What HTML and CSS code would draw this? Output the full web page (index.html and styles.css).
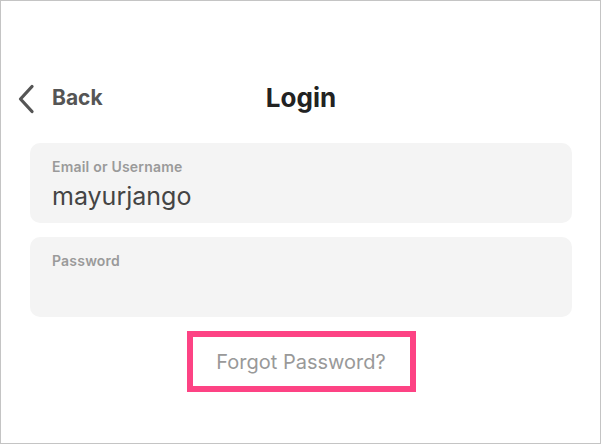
FILE: index.html
```html
<!DOCTYPE html>
<html lang="en">
<head>
  <meta charset="UTF-8"/>
  <meta name="viewport" content="width=device-width, initial-scale=1.0"/>
  <title>Login</title>
  <link rel="stylesheet" href="styles.css">
</head>
<body>
  <div class="screen">
    <div class="header">
      <a class="back" href="#">
        <svg class="chevron" width="18" height="30" viewBox="0 0 18 30">
          <path d="M15 2.5 L3.5 15 L15 27.5" fill="none" stroke="#555" stroke-width="3.3" stroke-linecap="round" stroke-linejoin="round"/>
        </svg>
        <span>Back</span>
      </a>
      <h1>Login</h1>
      <div></div>
    </div>

    <div class="field">
      <label>Email or Username</label>
      <div class="value">mayurjango</div>
    </div>

    <div class="field">
      <label>Password</label>
      <div class="value"></div>
    </div>

    <div class="forgot-wrap">
      <a class="forgot" href="#">Forgot Password?</a>
    </div>
  </div>
</body>
</html>
```

FILE: styles.css
```css
* {
  box-sizing: border-box;
}

body {
  margin: 0;
  font-family: Inter, 'Noto Sans', sans-serif;
  background: #fff;
}

.screen {
  width: 601px;
  height: 444px;
  border: 1px solid #c4c4c4;
  padding: 0 28px 0 29px;
}

.header {
  display: grid;
  grid-template-columns: 1fr auto 1fr;
  align-items: center;
  height: 40px;
  margin: 77px -13px 25px -13px;
}

.back {
  display: flex;
  align-items: center;
  gap: 17px;
  color: #555;
  text-decoration: none;
  font-size: 21px;
  font-weight: 700;
  line-height: 40px;
}

.chevron {
  display: block;
  margin-top: 2px;
}

h1 {
  margin: 0;
  font-size: 26px;
  font-weight: 700;
  line-height: 40px;
  color: #222;
}

.field {
  background: #f4f4f4;
  border-radius: 10px;
  height: 80px;
  padding: 15px 22px;
  margin-bottom: 14px;
}

.field label {
  display: block;
  font-size: 14px;
  line-height: 17px;
  font-weight: 600;
  letter-spacing: 0.2px;
  color: #9a9a9a;
}

.field .value {
  font-size: 25px;
  line-height: 30px;
  color: #444;
  margin-top: 6px;
}

.forgot-wrap {
  display: flex;
  justify-content: center;
  margin-top: 4px;
}

.forgot {
  display: block;
  width: 229px;
  height: 61px;
  border: 6px solid #fd4384;
  padding-top: 2px;
  text-align: center;
  line-height: 47px;
  font-size: 20px;
  color: #999;
  text-decoration: none;
}
```
